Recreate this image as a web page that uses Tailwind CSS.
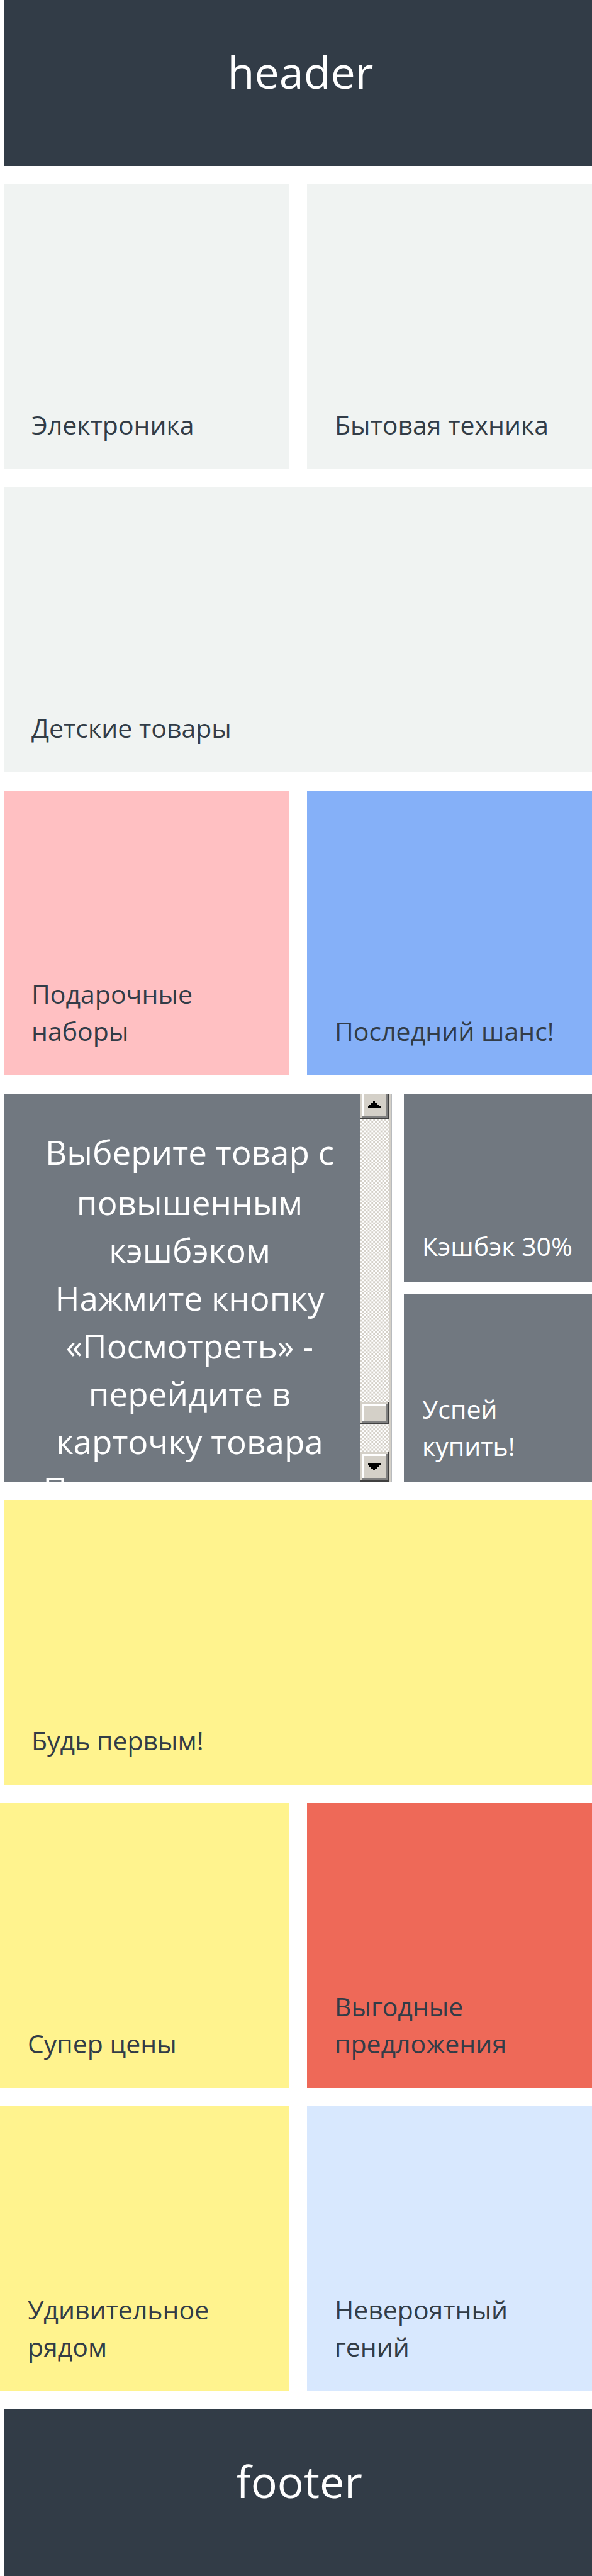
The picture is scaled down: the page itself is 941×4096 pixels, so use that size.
<!DOCTYPE html>
<html lang="ru">
<head>
<meta charset="utf-8">
<meta name="viewport" content="width=device-width, initial-scale=1">
<title>Каталог</title>
<script src="https://cdn.jsdelivr.net/npm/@tailwindcss/browser@4"></script>
</head>
<body class="bg-white font-['Open_Sans',sans-serif] text-[#323c47]">
<div class="flex min-h-screen flex-col gap-[29px]">
  <header class="ml-1.5 h-[264px] bg-[#323c47] pt-[66px] pl-2 text-center text-[70px] leading-[96px] text-white">header</header>
  <main class="flex flex-col gap-[29px] text-[41px] leading-[59px]">
    <div class="ml-1.5 grid grid-cols-2 gap-[29px]">
      <a href="#" class="flex h-[453px] items-end bg-[#f0f3f2] px-11 pb-[41px]">Электроника</a>
      <a href="#" class="flex h-[453px] items-end bg-[#f0f3f2] pb-[41px] pl-11">Бытовая техника</a>
    </div>
    <a href="#" class="ml-1.5 flex h-[453px] items-end bg-[#f0f3f2] px-11 pb-[41px]">Детские товары</a>
    <div class="ml-1.5 grid grid-cols-2 gap-[29px]">
      <a href="#" class="flex h-[453px] items-end bg-[#ffc0c2] px-11 pb-[41px]">Подарочные наборы</a>
      <a href="#" class="flex h-[453px] items-end bg-[#85b0f8] pb-[41px] pl-11">Последний шанс!</a>
    </div>
    <div class="ml-1.5 flex h-[617px] gap-[19px]">
      <section class="flex flex-[617] bg-[#717880] text-white">
        <div class="flex-1 overflow-hidden pt-[55px] pr-9 pl-[60px] text-center text-[53px] leading-[76px]">
          <p class="mb-1">Выберите товар с</p>
          <p>повышенным кэшбэком</p>
          <p>Нажмите кнопку «Посмотреть» - перейдите в карточку товара</p>
          <p>Прокрутите далее</p>
        </div>
        <svg class="h-full w-[50px] shrink-0" viewBox="0 0 52 633" preserveAspectRatio="none" shape-rendering="crispEdges" aria-hidden="true">
          <defs>
            <pattern id="dots" width="6" height="6" patternUnits="userSpaceOnUse">
              <path fill="#fff" d="M0 0h6v6H0z"/><path fill="#d4d0c8" d="M3 0h3v3H3zM0 3h3v3H0z"/>
            </pattern>
          </defs>
          <path fill="#d4d0c8" d="M0 0h51v633H0z"/><path fill="#b8bbbe" d="M51 0h1v633h-1z"/>
          <path fill="url(#dots)" d="M0 42h48v462H0zM0 540h48v45H0z"/>
          <path fill="#404040" d="M45 0h3v42H0v-3h45z"/><path fill="#808080" d="M42 0h3v39H3v-3h39z"/><path fill="#fff" d="M3 0h3v36H3z"/>
          <path d="M21 12h3v3h3v3h3v3h3v3H12v-3h3v-3h3v-3h3z"/>
          <path fill="#404040" d="M45 504h3v36H0v-3h45z"/><path fill="#808080" d="M42 507h3v30H3v-3h39z"/><path fill="#fff" d="M3 507h39v3H6v24H3z"/>
          <path fill="#404040" d="M45 585h3v48H0v-3h45z"/><path fill="#808080" d="M42 588h3v42H3v-3h39z"/><path fill="#fff" d="M3 588h39v3H6v36H3z"/>
          <path d="M12 603h21v3h-3v3h-3v3h-3v3h-3v-3h-3v-3h-3v-3h-3z"/>
        </svg>
      </section>
      <div class="flex flex-[299] flex-col gap-5">
        <a href="#" class="flex flex-1 items-end bg-[#717880] pb-[27px] pl-[29px] text-white">Кэшбэк 30%</a>
        <a href="#" class="flex flex-1 items-end bg-[#717880] pr-[100px] pb-[27px] pl-[29px] text-white">Успей купить!</a>
      </div>
    </div>
    <a href="#" class="ml-1.5 flex h-[453px] items-end bg-[#fff38e] px-11 pb-[41px]">Будь первым!</a>
    <div class="grid grid-cols-[459fr_453fr] gap-[29px]">
      <a href="#" class="flex h-[453px] items-end bg-[#fff38e] px-11 pb-[41px]">Супер цены</a>
      <a href="#" class="flex h-[453px] items-end bg-[#ee6958] px-11 pb-[41px]">Выгодные предложения</a>
      <a href="#" class="flex h-[453px] items-end bg-[#fff38e] px-11 pb-[41px]">Удивительное рядом</a>
      <a href="#" class="flex h-[453px] items-end bg-[#d8e8fe] px-11 pb-[41px]">Невероятный гений</a>
    </div>
  </main>
  <footer class="ml-1.5 h-[265px] bg-[#323c47] pt-[66px] pl-1 text-center text-[70px] leading-[96px] text-white">footer</footer>
</div>
</body>
</html>
